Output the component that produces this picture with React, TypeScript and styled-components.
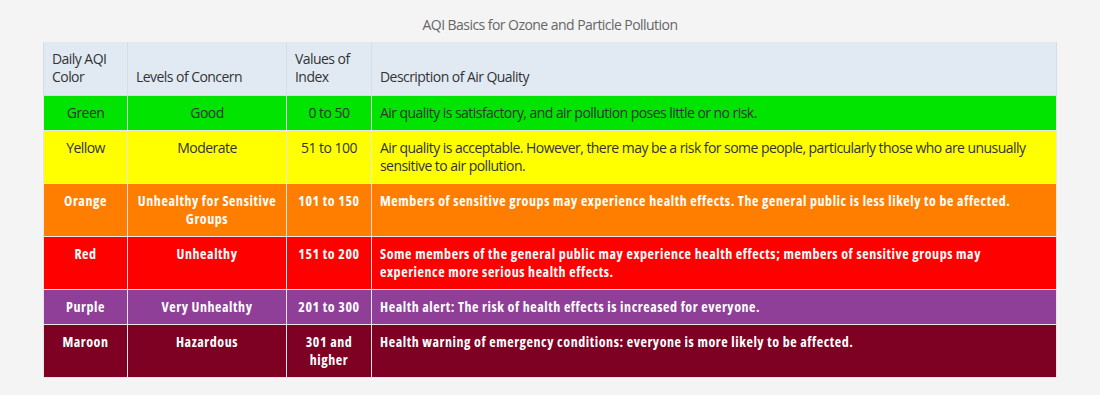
import React from 'react';
import styled, { createGlobalStyle } from 'styled-components';

const GlobalStyle = createGlobalStyle`
  body {
    margin: 0;
    background: #f4f4f4;
    font-family: 'Open Sans', 'Liberation Sans', sans-serif;
    font-stretch: 90%;
    letter-spacing: -0.55px;
  }
`;

interface Level {
  color: string;
  concern: string;
  range: string;
  description: string;
  bg: string;
  light: boolean;
}

const levels: Level[] = [
  { color: 'Green', concern: 'Good', range: '0 to 50', description: 'Air quality is satisfactory, and air pollution poses little or no risk.', bg: '#00e400', light: false },
  { color: 'Yellow', concern: 'Moderate', range: '51 to 100', description: 'Air quality is acceptable. However, there may be a risk for some people, particularly those who are unusually sensitive to air pollution.', bg: '#ffff00', light: false },
  { color: 'Orange', concern: 'Unhealthy for Sensitive Groups', range: '101 to 150', description: 'Members of sensitive groups may experience health effects. The general public is less likely to be affected.', bg: '#ff7e00', light: true },
  { color: 'Red', concern: 'Unhealthy', range: '151 to 200', description: 'Some members of the general public may experience health effects; members of sensitive groups may experience more serious health effects.', bg: '#ff0000', light: true },
  { color: 'Purple', concern: 'Very Unhealthy', range: '201 to 300', description: 'Health alert: The risk of health effects is increased for everyone.', bg: '#8f3f97', light: true },
  { color: 'Maroon', concern: 'Hazardous', range: '301 and higher', description: 'Health warning of emergency conditions: everyone is more likely to be affected.', bg: '#7e0023', light: true },
];

const Page = styled.div`
  padding: 15px 43px 17px 43px;
`;

const Title = styled.div`
  text-align: center;
  color: #666;
  font-size: 14px;
  line-height: 20px;
  margin-bottom: 7px;
`;

const Table = styled.table`
  width: 100%;
  table-layout: fixed;
  border-collapse: collapse;
  font-size: 14px;
  line-height: 18px;
`;

const HeadCell = styled.th<{ $w?: number }>`
  box-sizing: border-box;
  background: #e1eaf3;
  color: #333;
  font-weight: normal;
  text-align: left;
  vertical-align: bottom;
  padding: 8px 8px 9px 8px;
  border: 1px solid #d6dde5;
  border-top: none;
  width: ${(p) => (p.$w ? `${p.$w}px` : 'auto')};
`;

const Row = styled.tr<{ $bg: string; $light: boolean }>`
  background: ${(p) => p.$bg};
  color: ${(p) => (p.$light ? '#fff' : '#333')};
  font-weight: ${(p) => (p.$light ? 'bold' : 'normal')};
  font-stretch: ${(p) => (p.$light ? '75%' : '90%')};
  letter-spacing: ${(p) => (p.$light ? '0.56px' : '-0.55px')};
`;

const Cell = styled.td<{ $center?: boolean }>`
  box-sizing: border-box;
  padding: 8px 8px;
  vertical-align: top;
  text-align: ${(p) => (p.$center ? 'center' : 'left')};
  border: 1px solid #e6e6e6;
`;

export default function App() {
  return (
    <Page>
      <GlobalStyle />
      <Title>AQI Basics for Ozone and Particle Pollution</Title>
      <Table>
        <thead>
          <tr>
            <HeadCell $w={84}>Daily AQI Color</HeadCell>
            <HeadCell $w={159}>Levels of Concern</HeadCell>
            <HeadCell $w={85}>Values of Index</HeadCell>
            <HeadCell>Description of Air Quality</HeadCell>
          </tr>
        </thead>
        <tbody>
          {levels.map((l) => (
            <Row key={l.color} $bg={l.bg} $light={l.light}>
              <Cell $center>{l.color}</Cell>
              <Cell $center>{l.concern}</Cell>
              <Cell $center>{l.range}</Cell>
              <Cell>{l.description}</Cell>
            </Row>
          ))}
        </tbody>
      </Table>
    </Page>
  );
}
